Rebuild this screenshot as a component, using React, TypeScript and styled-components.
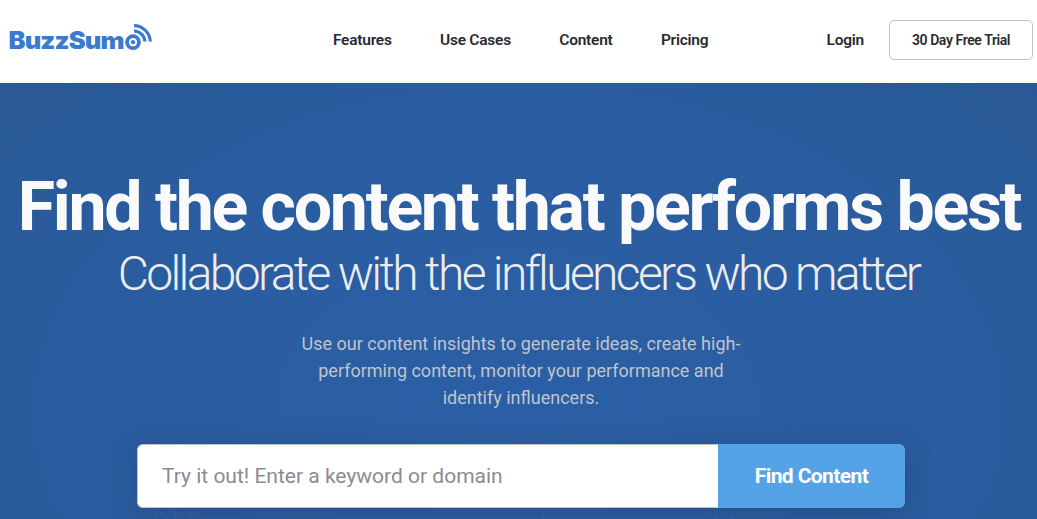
import React from "react";
import styled, { createGlobalStyle } from "styled-components";

const navItems = ["Features", "Use Cases", "Content", "Pricing"];

function Logo() {
  return (
    <LogoLink href="#" aria-label="BuzzSumo">
      <LogoText>BuzzSum</LogoText>
      <LogoMark width="32" height="30" viewBox="0 0 32 30" fill="none">
        <circle cx="11" cy="21.2" r="6" stroke="#3b7acd" strokeWidth="3.7" />
        <circle cx="11" cy="21.2" r="2.1" fill="#3b7acd" />
        <path d="M12 10 A11 11 0 0 1 22.9 20.5" stroke="#3b7acd" strokeWidth="3.1" />
        <path d="M12 4.6 A16.5 16.5 0 0 1 28.3 20.5" stroke="#3b7acd" strokeWidth="3.1" />
      </LogoMark>
    </LogoLink>
  );
}

function Header() {
  return (
    <HeaderWrap>
      <Logo />
      <Nav>
        {navItems.map((item) => (
          <NavLink href="#" key={item}>
            {item}
          </NavLink>
        ))}
      </Nav>
      <Account>
        <NavLink href="#">Login</NavLink>
        <TrialButton>30 Day Free Trial</TrialButton>
      </Account>
    </HeaderWrap>
  );
}

function Hero() {
  return (
    <HeroWrap>
      <Title>Find the content that performs best</Title>
      <SubTitle>Collaborate with the influencers who matter</SubTitle>
      <Description>
        Use our content insights to generate ideas, create high-performing
        content, monitor your performance and identify influencers.
      </Description>
      <SearchForm onSubmit={(e) => e.preventDefault()}>
        <SearchInput
          type="text"
          placeholder="Try it out! Enter a keyword or domain"
        />
        <SearchButton>Find Content</SearchButton>
      </SearchForm>
      <Pattern width="768" height="20" viewBox="0 0 768 20">
        <path d="M13 6h14M20 0v13M31 6h14M38 0v13M48 6h14M55 0v13" />
        <path d="M391 6v13M406 6v13M421 6v13M561 8v11M578 6v13M596 6v13" />
      </Pattern>
    </HeroWrap>
  );
}

function App() {
  return (
    <Page>
      <GlobalStyle />
      <Header />
      <Hero />
    </Page>
  );
}

export default App;

const GlobalStyle = createGlobalStyle`
  * {
    box-sizing: border-box;
  }
  body {
    margin: 0;
    overflow: hidden;
    font-family: Roboto, "Liberation Sans", sans-serif;
  }
`;

const Page = styled.div`
  display: flex;
  flex-direction: column;
  height: 100vh;
  overflow: hidden;
`;

const HeaderWrap = styled.header`
  display: flex;
  align-items: center;
  flex: none;
  height: 83px;
  padding: 0 4px 3px 8px;
  background: #ffffff;
`;

const LogoLink = styled.a`
  display: flex;
  align-items: center;
  width: 325px;
  color: #3b7acd;
  text-decoration: none;
`;

const LogoText = styled.span`
  width: 116px;
  padding-top: 2px;
  font-family: Inter, sans-serif;
  font-size: 24px;
  font-weight: 900;
  line-height: 30px;
  letter-spacing: -0.8px;
  text-indent: 0.5px;
  transform: scaleX(1.06);
  transform-origin: left;
`;

const LogoMark = styled.svg`
  flex: none;
  margin: -8px 0 0 -2.5px;
`;

const Nav = styled.nav`
  display: flex;
  gap: 48.4px;
`;

const NavLink = styled.a`
  color: #282a30;
  font-size: 15.5px;
  font-weight: 600;
  letter-spacing: -0.25px;
  text-decoration: none;
`;

const Account = styled.div`
  display: flex;
  align-items: center;
  gap: 25px;
  margin-left: auto;
`;

const TrialButton = styled.button`
  width: 144px;
  height: 40px;
  padding: 0;
  border: 1px solid #c4c4c8;
  border-radius: 5px;
  background: #ffffff;
  color: #282a30;
  font-family: inherit;
  font-size: 14px;
  font-weight: 600;
  letter-spacing: -0.4px;
`;

const HeroWrap = styled.main`
  display: flex;
  flex-direction: column;
  align-items: center;
  flex: 1;
  min-height: 0;
  overflow: hidden;
  padding: 88px 0 0 5px;
  background: radial-gradient(
    ellipse 75% 120% at 50% 75%,
    #2b5fa5 0%,
    #2a5c9f 60%,
    #285792 100%
  );
`;

const Title = styled.h1`
  margin: 0 0 0 -4px;
  color: #fafafa;
  font-size: 68px;
  font-weight: 700;
  line-height: 72px;
  letter-spacing: -2.27px;
  white-space: nowrap;
`;

const SubTitle = styled.h2`
  margin: 3px 0 0 -5px;
  color: #ececee;
  font-size: 48px;
  font-weight: 300;
  line-height: 56px;
  letter-spacing: -2.64px;
  white-space: nowrap;
`;

const Description = styled.p`
  width: 450px;
  margin: 28px 0 0;
  color: #c0c4cd;
  font-size: 18px;
  line-height: 27px;
  text-align: center;
`;

const SearchForm = styled.form`
  display: flex;
  flex: none;
  width: 768px;
  height: 64px;
  margin-top: 33px;
  border-radius: 6px;
  box-shadow: 0 5px 24px rgba(40, 50, 75, 0.35);
`;

const SearchInput = styled.input`
  flex: 1;
  min-width: 0;
  padding: 0 24px;
  border: 1px solid #c4c4c8;
  border-right: 0;
  border-radius: 6px 0 0 6px;
  background: #ffffff;
  font-family: inherit;
  font-size: 21px;
  outline: none;

  &::placeholder {
    color: #8b8b95;
    opacity: 1;
  }
`;

const SearchButton = styled.button`
  width: 187px;
  padding: 0;
  border: 0;
  border-radius: 0 6px 6px 0;
  background: #54a3e6;
  color: #ffffff;
  font-family: inherit;
  font-size: 21px;
  font-weight: 700;
  letter-spacing: -0.6px;
`;

const Pattern = styled.svg`
  flex: none;
  stroke: rgba(90, 150, 220, 0.12);
  stroke-width: 1.5;
`;
